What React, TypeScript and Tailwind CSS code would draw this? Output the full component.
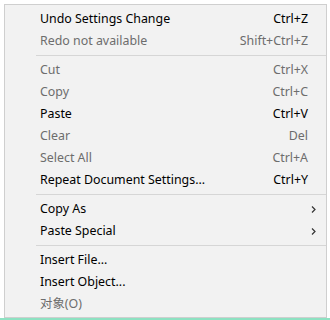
type Item =
  | { kind: "sep" }
  | { kind: "item"; label: string; shortcut?: string; disabled?: boolean; submenu?: boolean };

const items: Item[] = [
  { kind: "item", label: "Undo Settings Change", shortcut: "Ctrl+Z" },
  { kind: "item", label: "Redo not available", shortcut: "Shift+Ctrl+Z", disabled: true },
  { kind: "sep" },
  { kind: "item", label: "Cut", shortcut: "Ctrl+X", disabled: true },
  { kind: "item", label: "Copy", shortcut: "Ctrl+C", disabled: true },
  { kind: "item", label: "Paste", shortcut: "Ctrl+V" },
  { kind: "item", label: "Clear", shortcut: "Del", disabled: true },
  { kind: "item", label: "Select All", shortcut: "Ctrl+A", disabled: true },
  { kind: "item", label: "Repeat Document Settings...", shortcut: "Ctrl+Y" },
  { kind: "sep" },
  { kind: "item", label: "Copy As", submenu: true },
  { kind: "item", label: "Paste Special", submenu: true },
  { kind: "sep" },
  { kind: "item", label: "Insert File..." },
  { kind: "item", label: "Insert Object..." },
  { kind: "item", label: "对象(O)", disabled: true },
];

function Chevron() {
  return (
    <svg width="5" height="7" viewBox="0 0 5 7" className="text-[#333]">
      <path d="M1 0.5 L4 3.5 L1 6.5" fill="none" stroke="currentColor" strokeWidth="1.2" />
    </svg>
  );
}

export default function App() {
  return (
    <div
      className="flex h-[320px] w-[330px] flex-col bg-white"
      style={{ fontFamily: '"Noto Sans", "Noto Sans CJK SC", sans-serif' }}
    >
      <div className="flex flex-1 pl-[4px] pt-[4px]">
        <div className="flex w-[323px] flex-col border border-[#cfcfcf] bg-[#f2f2f2] pb-[2px] pt-[3px]">
          {items.map((item, i) =>
            item.kind === "sep" ? (
              <div key={i} className="flex h-[7px] items-center pl-[31px]">
                <div className="h-px flex-1 bg-[#d6d6d6]" />
              </div>
            ) : (
              <div
                key={i}
                className={`flex h-[22px] items-center pl-[35px] text-[12.4px] ${
                  item.disabled ? "text-[#6d6d6d]" : "text-black"
                }`}
              >
                <span className="flex-1">{item.label}</span>
                {item.shortcut && <span className="pr-[18px]">{item.shortcut}</span>}
                {item.submenu && (
                  <span className="flex pr-[10px]">
                    <Chevron />
                  </span>
                )}
              </div>
            )
          )}
        </div>
      </div>
      <div className="h-[2px] bg-[#8ee2c2]" />
    </div>
  );
}
